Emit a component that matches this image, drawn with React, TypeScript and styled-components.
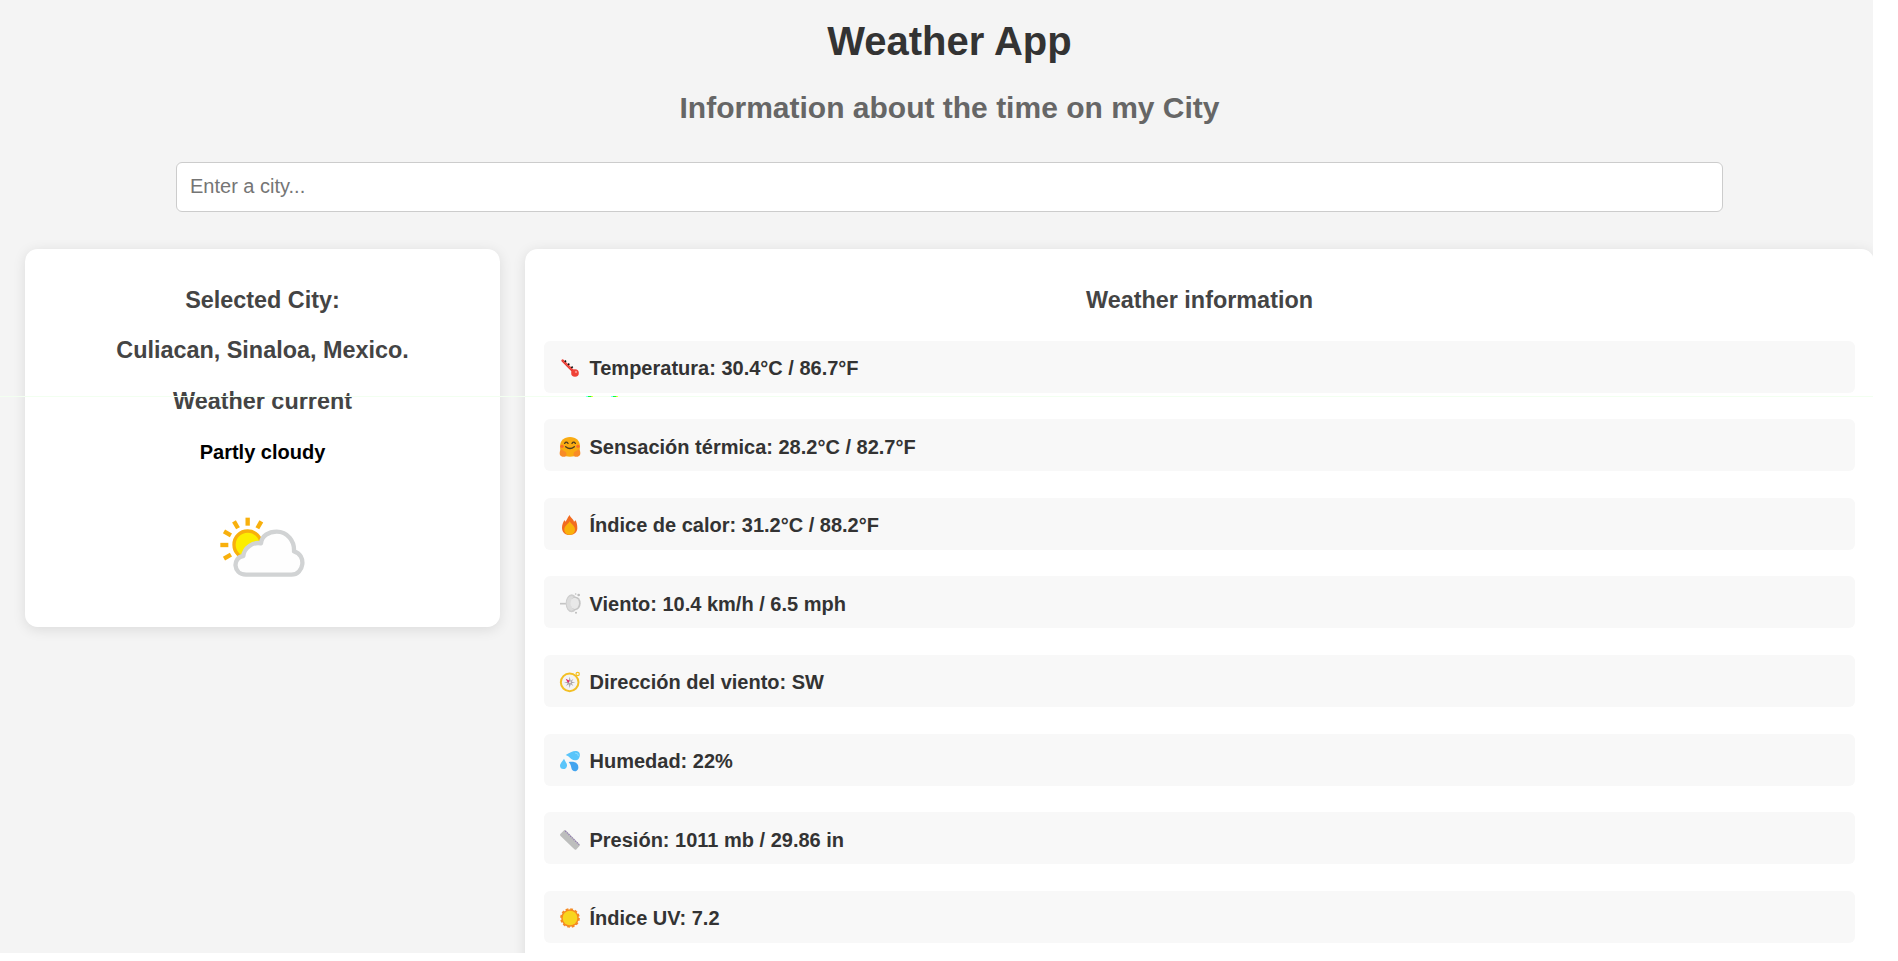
import React from 'react';
import styled, { createGlobalStyle } from 'styled-components';

const GlobalStyle = createGlobalStyle`
  * { box-sizing: border-box; }
  body {
    margin: 0;
    background: #fff;
    overflow: hidden;
    font-family: 'Liberation Sans', Arial, sans-serif;
  }
`;

const Page = styled.main`
  position: relative;
  width: 1873px;
  height: 953px;
  overflow: hidden;
  background: #f4f4f4;
`;

const Header = styled.header`
  display: flex;
  flex-direction: column;
  align-items: center;
  padding: 18px 0 37px;
  width: 1899px;
`;

const Title = styled.h1`
  margin: 0;
  font-size: 40px;
  line-height: 46px;
  color: #333;
`;

const Subtitle = styled.h2`
  margin: 27px 0 0;
  font-size: 30px;
  line-height: 34px;
  color: #666;
`;

const CityInput = styled.input`
  display: block;
  width: 1547px;
  height: 50px;
  margin: 0 0 0 176px;
  padding: 0 13px 2px;
  border: 1px solid #ccc;
  border-radius: 6px;
  background: #fff;
  font: 20px 'Liberation Sans', Arial, sans-serif;
  &::placeholder { color: #757575; }
`;

const Columns = styled.div`
  display: flex;
  align-items: flex-start;
  gap: 25px;
  width: 1875px;
  margin-top: 36.75px;
  padding-left: 25px;
`;

const Card = styled.section<{ $width: number; $height: number }>`
  flex: none;
  display: flex;
  flex-direction: column;
  align-items: center;
  width: ${(p) => p.$width}px;
  height: ${(p) => p.$height}px;
  padding: 38px 19px 0;
  border-radius: 12.5px;
  background: #fff;
  box-shadow: 0 2.5px 12.5px rgba(0, 0, 0, 0.1);
`;

const CardHeading = styled.h3`
  margin: 0 0 23.4px;
  font-size: 23.4px;
  line-height: 27px;
  color: #444;
`;

const Condition = styled.p`
  margin: 2.8px 0 44.2px;
  font-size: 20px;
  font-weight: bold;
  line-height: 23px;
  color: #000;
`;

const ReadingList = styled.ul`
  display: flex;
  flex-direction: column;
  gap: 26.57px;
  align-self: flex-start;
  width: 1311px;
  margin: 3.6px 0 0;
  padding: 0;
  list-style: none;
`;

const Reading = styled.li`
  display: flex;
  gap: 8.5px;
  height: 52px;
  padding: 16px 15px 0;
  border-radius: 6.25px;
  background: #f8f8f8;
  color: #333;
`;

const ReadingText = styled.span`
  padding-top: 0.47px;
  font-size: 20px;
  font-weight: bold;
  line-height: 23px;
  white-space: nowrap;
`;

const Emoji = styled.svg`
  flex: none;
  width: 22px;
  height: 22px;
`;

const Seam = styled.div`
  position: absolute;
  left: 0;
  top: 396px;
  width: 100%;
  height: 1px;
  background: #f2fff0;
`;

const SeamMark = styled.i<{ $left: number; $width: number }>`
  position: absolute;
  top: 0;
  left: ${(p) => p.$left}px;
  width: ${(p) => p.$width}px;
  height: 1px;
  background: linear-gradient(90deg, #7ff 0 20%, #1f3 35% 65%, #ef3 85%);
`;

const Thermometer = () => (
  <Emoji viewBox="0 0 66 66">
    <path d="M11 11 45 45" stroke="#e8372f" strokeWidth="8" strokeLinecap="round" />
    <circle cx="48" cy="48" r="11.5" fill="#ef4136" />
    <circle cx="51" cy="45" r="3.5" fill="#f98d86" />
    <path d="m17 15 4-4M27 24l4-4M37 33l4-4" stroke="#111" strokeWidth="5" />
    <path d="m12 11 27 27" stroke="#f9766d" strokeWidth="2" />
  </Emoji>
);

const HuggingFace = () => (
  <Emoji viewBox="0 0 66 66">
    <path d="M33 6c18 0 30 11 30 29 0 20-11 30-30 30S3 55 3 35C3 17 15 6 33 6Z" fill="#f9ab12" />
    <g fill="none" stroke="#4a3a20" strokeWidth="4" strokeLinecap="round">
      <path d="M17 25q5-7 10 0M39 25q5-7 10 0" />
      <path d="M20 35q13 11 26 0" />
    </g>
    <circle cx="9" cy="34" r="5" fill="#fb6b2a" />
    <circle cx="57" cy="34" r="5" fill="#fb6b2a" />
    <path d="M4 46c1-5 5-4 7 0l9 5c4 5 3 12-2 14h-8C2 64 0 55 4 46ZM62 46c-1-5-5-4-7 0l-9 5c-4 5-3 12 2 14h8c8-1 10-10 6-19Z" fill="#f88b27" />
  </Emoji>
);

const Fire = () => (
  <Emoji viewBox="0 0 66 66">
    <path d="M32 3c2 9 11 10 13 20l5-4c3 8 5 13 5 23 0 12-9 21-23 21S9 54 9 41c0-10 4-16 7-23l3 5C25 18 24 11 32 3Z" fill="#f26c20" />
    <path d="M32 22c4 8 16 14 16 25 0 9-7 15-16 15s-16-6-16-15c0-11 12-17 16-25Z" fill="#f9b10b" />
  </Emoji>
);

const Wind = () => (
  <Emoji viewBox="0 0 66 66">
    <path d="M3 35h20" stroke="#c5c5c5" strokeWidth="5" />
    <ellipse cx="38" cy="34" rx="18" ry="27" fill="#cdcdcd" />
    <ellipse cx="37" cy="34" rx="14" ry="22" fill="#dcdcdc" />
    <ellipse cx="50" cy="34" rx="15" ry="20" fill="#c4c4c4" />
    <ellipse cx="47" cy="34" rx="13" ry="17" fill="#e8e8e8" />
    <g fill="#bdbdbd"><circle cx="50" cy="6" r="2.5" /><circle cx="59" cy="9" r="4" /><circle cx="51" cy="62" r="3" /></g>
  </Emoji>
);

const Compass = () => (
  <Emoji viewBox="0 0 66 66">
    <circle cx="32" cy="34" r="26.5" fill="#f4f3f3" stroke="#f3bf24" strokeWidth="6" />
    <circle cx="56" cy="9" r="5" fill="none" stroke="#f3bf24" strokeWidth="3.5" />
    <path d="m32 17 3 12 8-5-5 8 11 2-11 3 5 8-8-5-3 11-3-11-8 5 5-8-11-3 11-2-5-8 8 5Z" fill="#aaa4a7" />
    <path d="m20 23 13 7-6 5Z" fill="#e51e65" />
    <circle cx="33" cy="34" r="3" fill="#f2eeee" />
  </Emoji>
);

const Drops = () => (
  <Emoji viewBox="0 0 66 66">
    <path d="M20 15C33 7 45 1 55 4c10 3 9 16 4 22-5 6-15 6-22 1-6-5-10-10-17-12Z" fill="#5ac5fa" />
    <path d="M15 26c4 9 10 15 9 21-1 7-5 10-11 10S3 53 3 47c0-6 7-13 12-21Z" fill="#5ac5fa" />
    <path d="M29 36c11-1 20-1 26 6 5 7 4 18-3 21-8 2-14-2-15-10-1-7-4-12-8-17Z" fill="#42a4ef" />
    <path d="M48 9q11 0 10 9" fill="none" stroke="#8adcff" strokeWidth="3" />
  </Emoji>
);

const Ruler = () => (
  <Emoji viewBox="0 0 66 66">
    <path d="M4 18 16 6q2-1 4 1l42 42q2 2 0 4L51 65q-3 1-5-1L4 23q-2-3 0-5Z" fill="#bdbebd" />
    <path d="m19 9 41 41" stroke="#8f72b5" strokeWidth="4" strokeDasharray="3 4" />
  </Emoji>
);

const Sun = () => (
  <Emoji viewBox="0 0 66 66">
    <circle cx="33" cy="33" r="26.5" fill="#f58a22" />
    <circle cx="33" cy="33" r="26" fill="none" stroke="#f58a22" strokeWidth="7" strokeDasharray="8 5.61" />
    <circle cx="33" cy="33" r="22" fill="#f8d51e" />
  </Emoji>
);

const ConditionIcon = styled.svg`
  flex: none;
  width: 100px;
  height: 80px;
`;

const PartlyCloudy = () => (
  <ConditionIcon viewBox="638 382 300 240">
    <g fill="#f8b00c">
      {[-120, -90, -60, -30, 0, 30].map((angle) => (
        <rect key={angle} x="735.5" y="411" width="13" height="24" transform={`rotate(${angle} 742 493)`} />
      ))}
    </g>
    <circle cx="742" cy="492" r="41" fill="#fcee00" stroke="#f8b00c" strokeWidth="10" />
    <path
      d="M737 582C696 580 697 530 729 526C731 501 758 483 782 488C784 465 805 453 829 453C861 453 883 481 881 512C919 522 912 582 873 582Z"
      fill="#fefefe"
      stroke="#d1d3d4"
      strokeWidth="13"
      strokeLinejoin="round"
    />
  </ConditionIcon>
);

const readings = [
  { icon: Thermometer, text: 'Temperatura: 30.4°C / 86.7°F' },
  { icon: HuggingFace, text: 'Sensación térmica: 28.2°C / 82.7°F' },
  { icon: Fire, text: 'Índice de calor: 31.2°C / 88.2°F' },
  { icon: Wind, text: 'Viento: 10.4 km/h / 6.5 mph' },
  { icon: Compass, text: 'Dirección del viento: SW' },
  { icon: Drops, text: 'Humedad: 22%' },
  { icon: Ruler, text: 'Presión: 1011 mb / 29.86 in' },
  { icon: Sun, text: 'Índice UV: 7.2' },
];

export default function App() {
  return (
    <Page>
      <GlobalStyle />
      <Header>
        <Title>Weather App</Title>
        <Subtitle>Information about the time on my City</Subtitle>
      </Header>
      <CityInput placeholder="Enter a city..." />
      <Columns>
        <Card $width={475} $height={378.25}>
          <CardHeading>Selected City:</CardHeading>
          <CardHeading>Culiacan, Sinaloa, Mexico.</CardHeading>
          <CardHeading>Weather current</CardHeading>
          <Condition>Partly cloudy</Condition>
          <PartlyCloudy />
        </Card>
        <Card $width={1349} $height={760}>
          <CardHeading>Weather information</CardHeading>
          <ReadingList>
            {readings.map(({ icon: Icon, text }) => (
              <Reading key={text}>
                <Icon />
                <ReadingText>{text}</ReadingText>
              </Reading>
            ))}
          </ReadingList>
        </Card>
      </Columns>
      <Seam>
        <SeamMark $left={586} $width={7} />
        <SeamMark $left={611} $width={7} />
      </Seam>
    </Page>
  );
}
